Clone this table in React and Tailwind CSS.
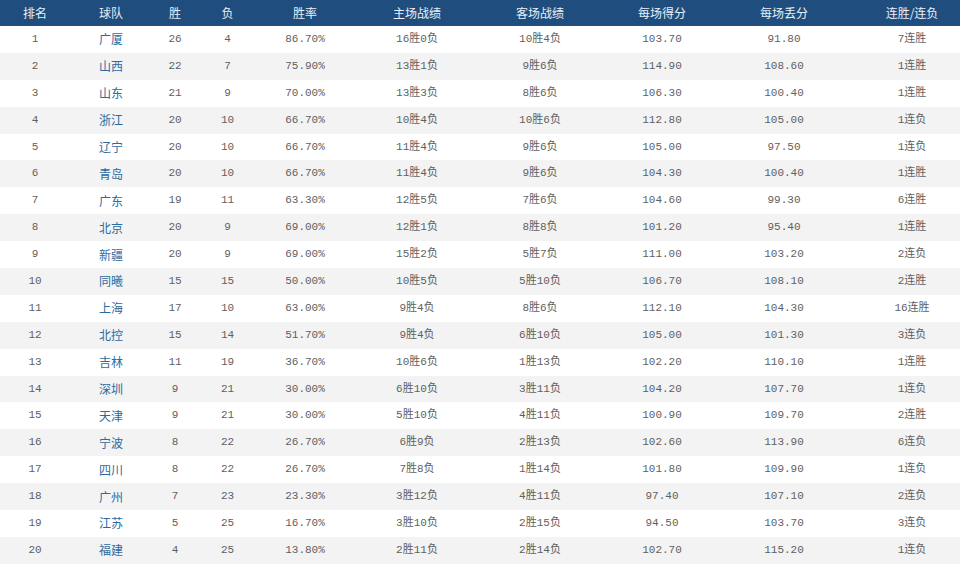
import React from "react";

const rows = [
  [1, "广厦", 26, 4, "86.70%", "16胜0负", "10胜4负", "103.70", "91.80", "7连胜"],
  [2, "山西", 22, 7, "75.90%", "13胜1负", "9胜6负", "114.90", "108.60", "1连胜"],
  [3, "山东", 21, 9, "70.00%", "13胜3负", "8胜6负", "106.30", "100.40", "1连胜"],
  [4, "浙江", 20, 10, "66.70%", "10胜4负", "10胜6负", "112.80", "105.00", "1连负"],
  [5, "辽宁", 20, 10, "66.70%", "11胜4负", "9胜6负", "105.00", "97.50", "1连负"],
  [6, "青岛", 20, 10, "66.70%", "11胜4负", "9胜6负", "104.30", "100.40", "1连胜"],
  [7, "广东", 19, 11, "63.30%", "12胜5负", "7胜6负", "104.60", "99.30", "6连胜"],
  [8, "北京", 20, 9, "69.00%", "12胜1负", "8胜8负", "101.20", "95.40", "1连胜"],
  [9, "新疆", 20, 9, "69.00%", "15胜2负", "5胜7负", "111.00", "103.20", "2连负"],
  [10, "同曦", 15, 15, "50.00%", "10胜5负", "5胜10负", "106.70", "108.10", "2连胜"],
  [11, "上海", 17, 10, "63.00%", "9胜4负", "8胜6负", "112.10", "104.30", "16连胜"],
  [12, "北控", 15, 14, "51.70%", "9胜4负", "6胜10负", "105.00", "101.30", "3连负"],
  [13, "吉林", 11, 19, "36.70%", "10胜6负", "1胜13负", "102.20", "110.10", "1连胜"],
  [14, "深圳", 9, 21, "30.00%", "6胜10负", "3胜11负", "104.20", "107.70", "1连负"],
  [15, "天津", 9, 21, "30.00%", "5胜10负", "4胜11负", "100.90", "109.70", "2连胜"],
  [16, "宁波", 8, 22, "26.70%", "6胜9负", "2胜13负", "102.60", "113.90", "6连负"],
  [17, "四川", 8, 22, "26.70%", "7胜8负", "1胜14负", "101.80", "109.90", "1连负"],
  [18, "广州", 7, 23, "23.30%", "3胜12负", "4胜11负", "97.40", "107.10", "2连负"],
  [19, "江苏", 5, 25, "16.70%", "3胜10负", "2胜15负", "94.50", "103.70", "3连负"],
  [20, "福建", 4, 25, "13.80%", "2胜11负", "2胜14负", "102.70", "115.20", "1连负"],
];

const headers = ["排名", "球队", "胜", "负", "胜率", "主场战绩", "客场战绩", "每场得分", "每场丢分", "连胜/连负"];

const grid =
  "grid grid-cols-[70px_82px_46px_59px_96px_128px_118px_126px_118px_117px]";

export default function App() {
  return (
    <div className="w-[960px] h-[564px] overflow-hidden bg-white">
      <div
        className={`${grid} h-[26px] items-center bg-[#1f4e7e] text-[12px] text-[#e9eff6] [font-family:'Noto_Sans_CJK_SC','Noto_Sans',sans-serif]`}
      >
        {headers.map((h, i) => (
          <div key={i} className={`text-center ${i === 9 ? "pl-[21px]" : ""}`}>
            {h}
          </div>
        ))}
      </div>
      {rows.map((r, ri) => (
        <div
          key={ri}
          className={`${grid} h-[26.9px] items-center text-[11px] text-[#5f5f5f] [font-family:'Liberation_Mono','Noto_Sans_CJK_SC',monospace] ${
            ri % 2 === 1 ? "bg-[#f3f3f3]" : "bg-white"
          }`}
        >
          {r.map((c, ci) => (
            <div
              key={ci}
              className={`text-center leading-none ${ci === 9 ? "pl-[21px]" : ""} ${
                ci === 1
                  ? "text-[12px] text-[#2c6aa0] [font-family:'Noto_Sans_CJK_SC',sans-serif]"
                  : ""
              }`}
            >
              {c}
            </div>
          ))}
        </div>
      ))}
    </div>
  );
}
